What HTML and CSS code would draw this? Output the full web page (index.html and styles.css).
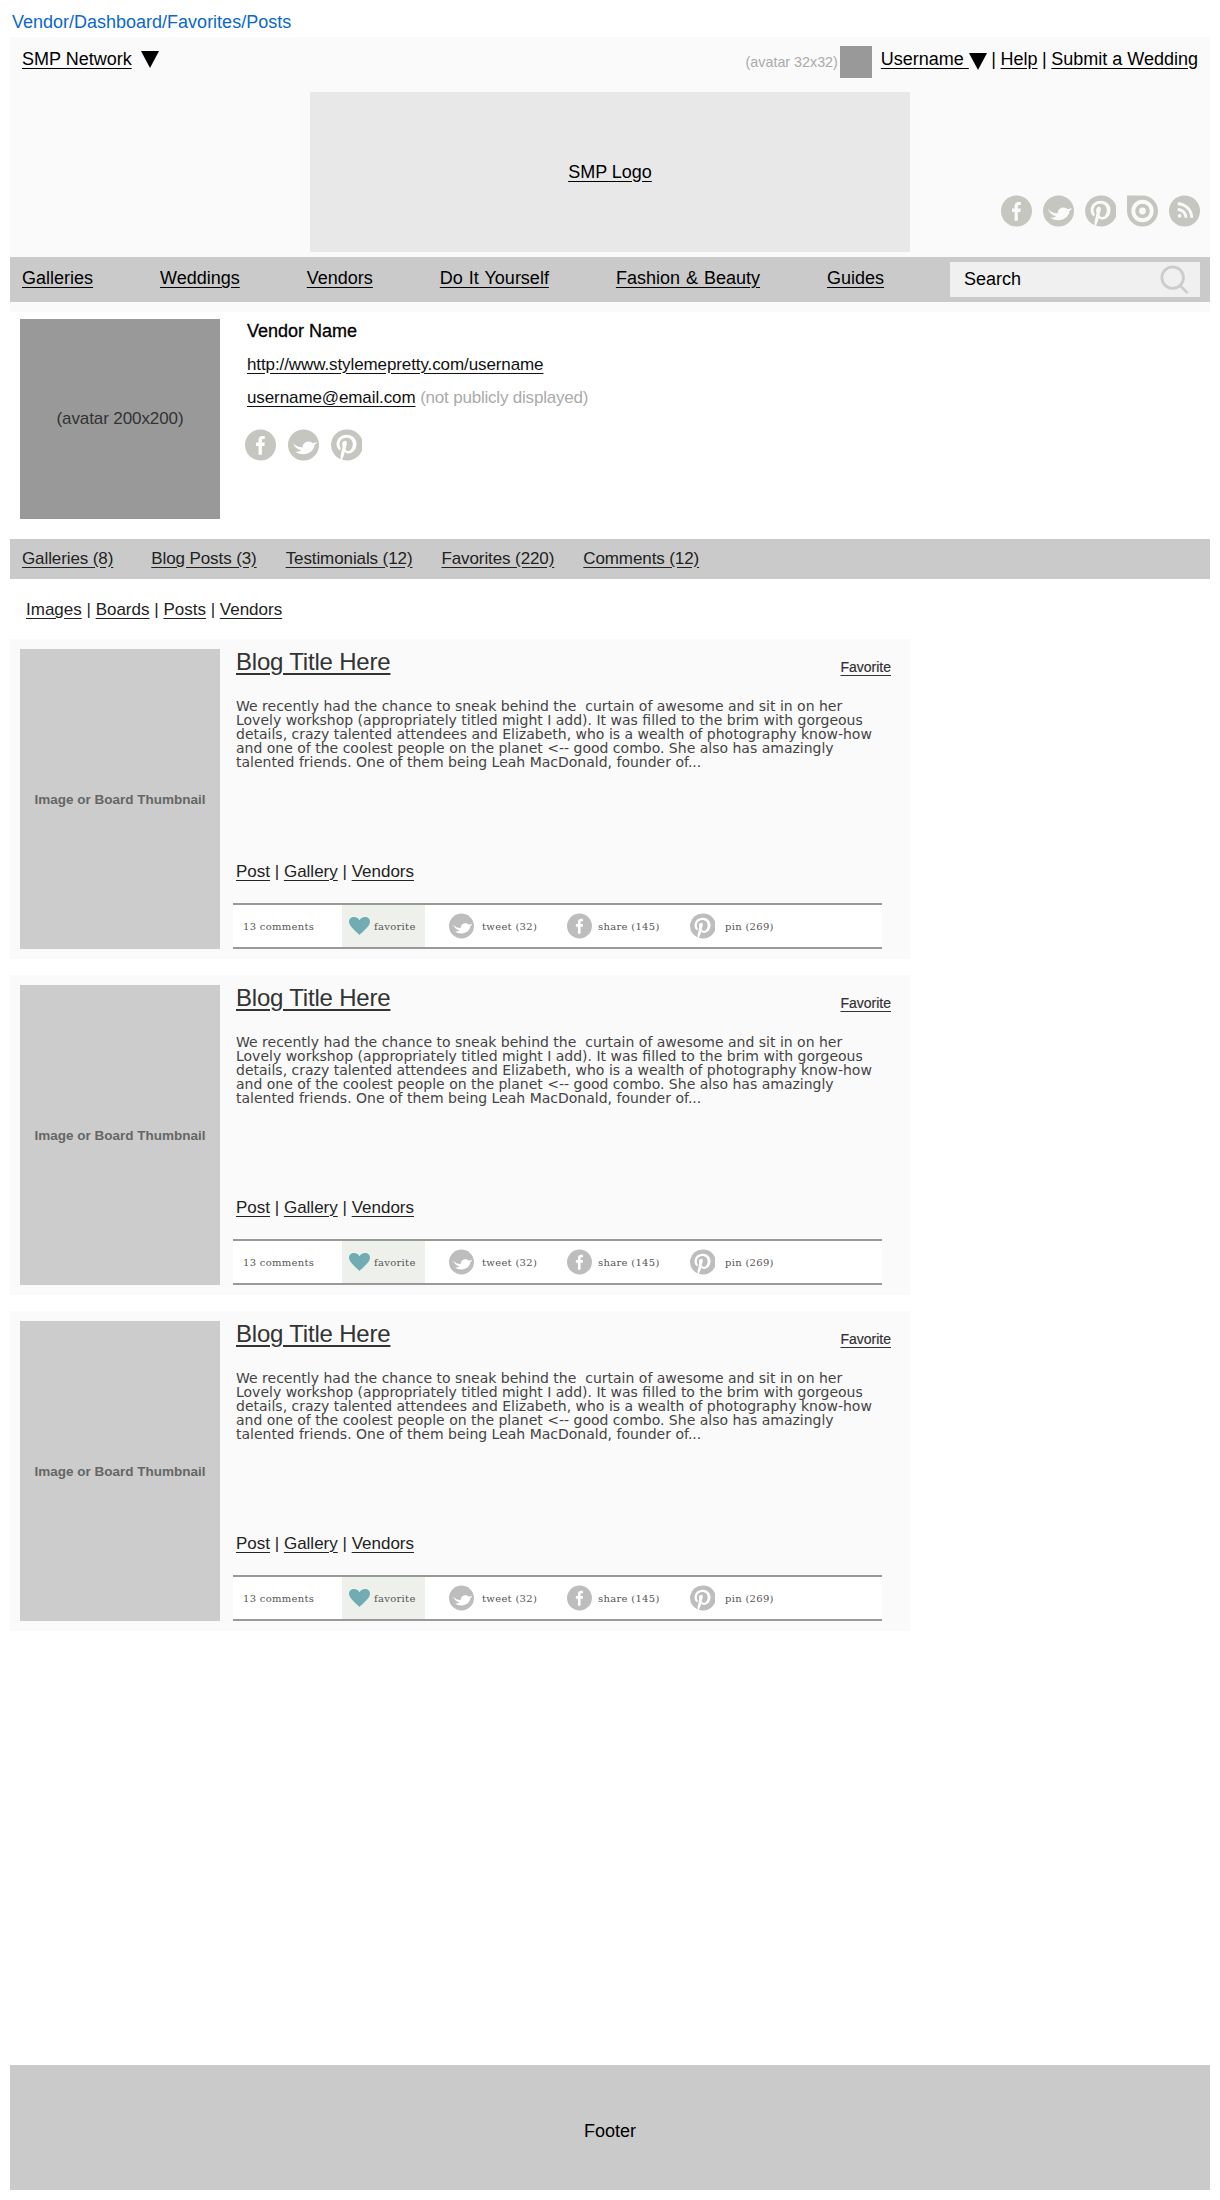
FILE: index.html
```html
<!DOCTYPE html>
<html lang="en">
<head>
    <meta charset="UTF-8">
    <meta name="viewport" content="width=device-width, initial-scale=1.0">
    <title>Vendor Dashboard - Favorites - Posts</title>
    <link rel="stylesheet" href="styles.css">
</head>
<body>
    <!-- shared icon shapes -->
    <svg class="icon-defs" aria-hidden="true">
        <symbol id="i-facebook" viewBox="0 0 32 32">
            <path fill-rule="evenodd" d="M16 0a16 16 0 1 0 0 32a16 16 0 1 0 0-32ZM14 26V17h-2.600v-3.600H14v-2.400c0-3 1.700-4.400 4.200-4.400c1 0 1.700.1 2.200.2v3.100h-1.500c-1.200 0-1.500.6-1.500 1.500v2h3l-.4 3.600h-2.600v9Z"/>
        </symbol>
        <symbol id="i-twitter" viewBox="0 0 32 32">
            <path fill-rule="evenodd" d="M16 0a16 16 0 1 0 0 32a16 16 0 1 0 0-32ZM5 14C8 17 11 18.500 15 18.500C15 15 18 12.500 21 12.500C23 12.500 24.500 13.300 25.500 14.300C27 14 28.500 13.500 30 12.800C29.400 14.200 28.500 15.200 27.300 16C27.300 21 22 25.500 16 25.500C12.500 25.500 9.500 24.500 7.500 23C10 23 12 22.500 13.500 21.300C10 21 7 18.500 5 14Z"/>
        </symbol>
        <symbol id="i-pinterest" viewBox="0 0 32 32">
            <path fill-rule="evenodd" d="M16 0a16 16 0 0 0-6 30.800c-.1-1.300-.2-3.200 0-4.600l2-8.200s-.5-1-.5-2.400c0-2.200 1.300-3.900 2.900-3.900c1.400 0 2 1 2 2.300c0 1.400-.9 3.400-1.300 5.300c-.4 1.600.8 2.900 2.400 2.900c2.800 0 5-3 5-7.300c0-3.800-2.700-6.500-6.600-6.500c-4.500 0-7.100 3.400-7.100 6.800c0 1.400.5 2.800 1.200 3.600c.1.200.1.300.1.500l-.5 1.900c-.1.300-.3.400-.6.200c-2-.9-3.200-3.800-3.200-6.200c0-5 3.700-9.700 10.600-9.700c5.600 0 9.900 4 9.900 9.300c0 5.500-3.500 10-8.300 10c-1.600 0-3.200-.8-3.700-1.900l-1 3.800c-.4 1.400-1.300 3.100-2 4.200A16 16 0 1 0 16 0Z"/>
        </symbol>
        <symbol id="i-target" viewBox="0 0 32 32">
            <path fill-rule="evenodd" d="M0 0H16a16 16 0 1 1-16 16ZM16 4.500a11.500 11.500 0 1 0 0 23a11.500 11.500 0 1 0 0-23ZM16 8.500a7.500 7.500 0 1 1 0 15a7.500 7.500 0 1 1 0-15ZM16 12.500a3.500 3.500 0 1 0 0 7a3.500 3.500 0 1 0 0-7Z"/>
        </symbol>
        <symbol id="i-rss" viewBox="0 0 32 32">
            <path fill-rule="evenodd" d="M16 0a16 16 0 1 0 0 32a16 16 0 1 0 0-32ZM9 13c5.500 0 10 4.500 10 10h-3c0-3.900-3.100-7-7-7ZM9 7c8.800 0 16 7.200 16 16h-3c0-7.200-5.800-13-13-13ZM11 19a2 2 0 1 1 0 4a2 2 0 1 1 0-4Z"/>
        </symbol>
        <symbol id="i-heart" viewBox="0 0 21 18">
            <path d="M10.500 18C8 15 0 9.500 0 4.700C0 1.800 2.200 0 4.700 0C7 0 9.300 1.200 10.500 3.200C11.700 1.200 14 0 16.300 0C18.800 0 21 1.800 21 4.700C21 9.500 13 15 10.500 18Z"/>
        </symbol>
    </svg>

    <p class="breadcrumb">Vendor/Dashboard/Favorites/Posts</p>

    <header class="site-header">
        <div class="top-bar">
            <div class="network">
                <a href="#">SMP Network</a>
                <span class="caret"></span>
            </div>
            <div class="user-links">
                <span class="avatar-label">(avatar 32x32)</span>
                <span class="avatar-small"></span>
                <a class="username" href="#">Username&nbsp;</a><span class="caret caret-user"></span>
                <span class="sep">|</span>
                <a href="#">Help</a>
                <span class="sep">|</span>
                <a href="#">Submit a Wedding</a>
            </div>
        </div>
        <div class="brand-row">
            <div class="logo"><a href="#">SMP Logo</a></div>
            <div class="site-social">
                <svg class="social-icon"><use href="#i-facebook"/></svg>
                <svg class="social-icon"><use href="#i-twitter"/></svg>
                <svg class="social-icon"><use href="#i-pinterest"/></svg>
                <svg class="social-icon"><use href="#i-target"/></svg>
                <svg class="social-icon"><use href="#i-rss"/></svg>
            </div>
        </div>
        <nav class="main-nav">
            <div class="main-nav-links">
                <a href="#">Galleries</a>
                <a href="#">Weddings</a>
                <a href="#">Vendors</a>
                <a href="#">Do It Yourself</a>
                <a href="#">Fashion &amp; Beauty</a>
                <a href="#">Guides</a>
            </div>
            <div class="search">
                <span>Search</span>
                <svg class="search-icon" viewBox="0 0 32 32">
                    <circle cx="13.500" cy="13.500" r="11.500"/>
                    <path d="M21.500 22L29.500 30"/>
                </svg>
            </div>
        </nav>
    </header>

    <section class="profile">
        <div class="avatar-large">(avatar 200x200)</div>
        <div class="profile-info">
            <div class="vendor-name">Vendor Name</div>
            <div class="profile-line"><a href="#">http://www.stylemepretty.com/username</a></div>
            <div class="profile-line"><a href="#">username@email.com</a> <span class="muted">(not publicly displayed)</span></div>
            <div class="profile-social">
                <svg class="social-icon"><use href="#i-facebook"/></svg>
                <svg class="social-icon"><use href="#i-twitter"/></svg>
                <svg class="social-icon"><use href="#i-pinterest"/></svg>
            </div>
        </div>
    </section>

    <nav class="tabs">
        <a href="#">Galleries (8)</a>
        <a href="#">Blog Posts (3)</a>
        <a href="#">Testimonials (12)</a>
        <a href="#">Favorites (220)</a>
        <a href="#">Comments (12)</a>
    </nav>

    <div class="sub-tabs">
        <a href="#">Images</a> | <a href="#">Boards</a> | <a href="#">Posts</a> | <a href="#">Vendors</a>
    </div>

    <main class="post-list">
        <article class="post">
            <div class="thumb">Image or Board Thumbnail</div>
            <div class="post-body">
                <div class="post-head">
                    <a class="post-title" href="#">Blog Title Here</a>
                    <a class="post-fav" href="#">Favorite</a>
                </div>
                <p class="post-text">We recently had the chance to sneak behind the&nbsp; curtain of awesome and sit in on her<br>Lovely workshop (appropriately titled might I add). It was filled to the brim with gorgeous<br>details, crazy talented attendees and Elizabeth, who is a wealth of photography know-how<br>and one of the coolest people on the planet &lt;-- good combo. She also has amazingly<br>talented friends. One of them being Leah MacDonald, founder of...</p>
                <div class="post-links"><a href="#">Post</a> | <a href="#">Gallery</a> | <a href="#">Vendors</a></div>
                <div class="share-bar">
                    <span class="share-item">13 comments</span>
                    <span class="share-item share-fav"><svg class="heart"><use href="#i-heart"/></svg>favorite</span>
                    <span class="share-item share-tweet"><svg class="share-icon"><use href="#i-twitter"/></svg>tweet (32)</span>
                    <span class="share-item share-fb"><svg class="share-icon"><use href="#i-facebook"/></svg>share (145)</span>
                    <span class="share-item share-pin"><svg class="share-icon"><use href="#i-pinterest"/></svg>pin (269)</span>
                </div>
            </div>
        </article>
        <article class="post">
            <div class="thumb">Image or Board Thumbnail</div>
            <div class="post-body">
                <div class="post-head">
                    <a class="post-title" href="#">Blog Title Here</a>
                    <a class="post-fav" href="#">Favorite</a>
                </div>
                <p class="post-text">We recently had the chance to sneak behind the&nbsp; curtain of awesome and sit in on her<br>Lovely workshop (appropriately titled might I add). It was filled to the brim with gorgeous<br>details, crazy talented attendees and Elizabeth, who is a wealth of photography know-how<br>and one of the coolest people on the planet &lt;-- good combo. She also has amazingly<br>talented friends. One of them being Leah MacDonald, founder of...</p>
                <div class="post-links"><a href="#">Post</a> | <a href="#">Gallery</a> | <a href="#">Vendors</a></div>
                <div class="share-bar">
                    <span class="share-item">13 comments</span>
                    <span class="share-item share-fav"><svg class="heart"><use href="#i-heart"/></svg>favorite</span>
                    <span class="share-item share-tweet"><svg class="share-icon"><use href="#i-twitter"/></svg>tweet (32)</span>
                    <span class="share-item share-fb"><svg class="share-icon"><use href="#i-facebook"/></svg>share (145)</span>
                    <span class="share-item share-pin"><svg class="share-icon"><use href="#i-pinterest"/></svg>pin (269)</span>
                </div>
            </div>
        </article>
        <article class="post">
            <div class="thumb">Image or Board Thumbnail</div>
            <div class="post-body">
                <div class="post-head">
                    <a class="post-title" href="#">Blog Title Here</a>
                    <a class="post-fav" href="#">Favorite</a>
                </div>
                <p class="post-text">We recently had the chance to sneak behind the&nbsp; curtain of awesome and sit in on her<br>Lovely workshop (appropriately titled might I add). It was filled to the brim with gorgeous<br>details, crazy talented attendees and Elizabeth, who is a wealth of photography know-how<br>and one of the coolest people on the planet &lt;-- good combo. She also has amazingly<br>talented friends. One of them being Leah MacDonald, founder of...</p>
                <div class="post-links"><a href="#">Post</a> | <a href="#">Gallery</a> | <a href="#">Vendors</a></div>
                <div class="share-bar">
                    <span class="share-item">13 comments</span>
                    <span class="share-item share-fav"><svg class="heart"><use href="#i-heart"/></svg>favorite</span>
                    <span class="share-item share-tweet"><svg class="share-icon"><use href="#i-twitter"/></svg>tweet (32)</span>
                    <span class="share-item share-fb"><svg class="share-icon"><use href="#i-facebook"/></svg>share (145)</span>
                    <span class="share-item share-pin"><svg class="share-icon"><use href="#i-pinterest"/></svg>pin (269)</span>
                </div>
            </div>
        </article>
    </main>

    <footer class="site-footer">Footer</footer>
</body>
</html>
```

FILE: styles.css
```css
body {
    margin: 0;
    padding: 0 10px;
    font-family: "Liberation Sans", Arial, sans-serif;
    font-size: 18px;
    color: #000;
    background: #fff;
}
a {
    color: inherit;
    text-decoration: underline;
    text-underline-offset: 3px;
}
.icon-defs {
    display: none;
}
.breadcrumb {
    margin: 0;
    height: 37px;
    padding: 12px 0 0 2px;
    box-sizing: border-box;
    line-height: 20px;
    color: #0b68c9;
}

/* Header */
.site-header {
    background: #fafafa;
    padding-bottom: 10px;
}
.top-bar {
    display: flex;
    justify-content: space-between;
    height: 55px;
    padding: 0 12px;
}
.network {
    display: flex;
    align-items: center;
    height: 44px;
    gap: 9px;
}
.caret {
    display: inline-block;
    width: 0;
    height: 0;
    border-left: 9px solid transparent;
    border-right: 9px solid transparent;
    border-top: 17px solid #000;
}
.user-links {
    display: flex;
    align-items: center;
    height: 50px;
    white-space: pre;
}
.user-links a {
    position: relative;
    top: -3px;
}
.avatar-label {
    font-size: 14.3px;
    color: #aaa;
    margin-right: 2px;
}
.avatar-small {
    width: 32px;
    height: 32px;
    background: #999;
    margin-right: 9px;
}
.caret-user {
    margin-top: -1px;
}
.sep {
    position: relative;
    top: -3px;
    margin: 0 4.5px;
}
.brand-row {
    display: grid;
    grid-template-columns: 300px 600px 300px;
    height: 160px;
    margin-bottom: 5px;
}
.logo {
    grid-column: 2;
    display: flex;
    align-items: center;
    justify-content: center;
    background: #e8e8e8;
}
.site-social {
    display: flex;
    justify-content: flex-end;
    align-items: flex-end;
    gap: 11px;
    padding: 0 10px 25px 0;
}
.social-icon {
    display: block;
    width: 31px;
    height: 32px;
    fill: #c5c6c0;
}
.main-nav {
    display: flex;
    align-items: center;
    justify-content: space-between;
    height: 45px;
    padding: 0 10px 0 12px;
    background: #cacaca;
}
.main-nav-links {
    display: flex;
    gap: 67px;
    margin-top: -2px;
    word-spacing: 1px;
}
.search {
    display: flex;
    align-items: center;
    justify-content: space-between;
    box-sizing: border-box;
    width: 250px;
    height: 35px;
    padding: 0 10px 0 14px;
    background: #f0f0f0;
}
.search-icon {
    width: 30px;
    height: 30px;
    fill: none;
    stroke: #ccc;
    stroke-width: 3;
}

/* Profile */
.profile {
    display: flex;
    gap: 27px;
    height: 227px;
    padding: 7px 0 0 10px;
    box-sizing: border-box;
}
.avatar-large {
    display: flex;
    align-items: center;
    justify-content: center;
    width: 200px;
    height: 200px;
    background: #999;
    color: #333;
    font-size: 17px;
    letter-spacing: -0.1px;
}
.vendor-name {
    line-height: 24px;
    margin-bottom: 10px;
    -webkit-text-stroke: 0.3px #000;
}
.profile-line {
    line-height: 24px;
    margin-bottom: 9px;
    font-size: 17px;
    letter-spacing: -0.1px;
    color: #111;
}
.muted {
    letter-spacing: -0.2px;
    color: #aaa;
}
.profile-social {
    display: flex;
    gap: 12px;
    margin: 19px 0 0 -2px;
}

/* Tabs */
.tabs {
    display: flex;
    gap: 29px;
    align-items: center;
    height: 40px;
    padding: 0 12px;
    background: #cacaca;
    font-size: 17px;
    letter-spacing: -0.1px;
    color: #222;
}
.tabs a:first-child {
    margin-right: 9px;
}
.sub-tabs {
    height: 60px;
    padding: 20px 0 0 16px;
    box-sizing: border-box;
    font-size: 17px;
    line-height: 22px;
    color: #222;
}

/* Posts */
.post-list {
    display: flex;
    flex-direction: column;
    gap: 16px;
    width: 900px;
}
.post {
    display: flex;
    gap: 16px;
    padding: 10px;
    background: #fafafa;
}
.thumb {
    display: flex;
    flex: none;
    align-items: center;
    justify-content: center;
    width: 200px;
    height: 300px;
    background: #ccc;
    color: #666;
    font-size: 13.5px;
    font-weight: bold;
}
.post-body {
    display: flex;
    flex-direction: column;
    flex: 1;
}
.post-head {
    display: flex;
    justify-content: space-between;
    align-items: flex-end;
    height: 27px;
    padding-right: 9px;
}
.post-title {
    font-size: 24px;
    line-height: 28px;
    letter-spacing: -0.2px;
    color: #333;
}
.post-fav {
    font-size: 14px;
    line-height: 18px;
    color: #333;
    -webkit-text-stroke: 0.2px #333;
}
.post-text {
    margin: 23px 0 0;
    font-family: "DejaVu Sans", sans-serif;
    font-size: 14px;
    line-height: 14px;
    color: #444;
    white-space: nowrap;
}
.post-links {
    margin-top: auto;
    margin-bottom: 21px;
    font-size: 17px;
    line-height: 20px;
    color: #222;
}
.share-bar {
    display: grid;
    grid-template-columns: 109px 83px 142px 123px 1fr;
    align-items: stretch;
    box-sizing: border-box;
    width: 649px;
    height: 46px;
    margin-left: -3px;
    border-top: 2px solid #999;
    border-bottom: 2px solid #999;
    background: #fff;
    font-family: "DejaVu Serif", serif;
    font-size: 10px;
    letter-spacing: 0.3px;
    color: #555;
}
.share-item {
    display: flex;
    align-items: center;
}
.share-item:first-child {
    padding-left: 10px;
}
.share-fav {
    padding-left: 7px;
    gap: 4px;
    background: #eef0ec;
}
.heart {
    width: 21px;
    height: 18px;
    fill: #71acb2;
}
.share-icon {
    flex: none;
    width: 25px;
    height: 26px;
    fill: #bcbdbc;
}
.share-tweet {
    padding-left: 24px;
    gap: 8px;
}
.share-fb {
    gap: 6px;
}
.share-pin {
    gap: 10px;
}

/* Footer */
.site-footer {
    display: flex;
    align-items: center;
    justify-content: center;
    box-sizing: border-box;
    height: 125px;
    padding-top: 8px;
    margin-top: 434px;
    background: #cacaca;
}
```
